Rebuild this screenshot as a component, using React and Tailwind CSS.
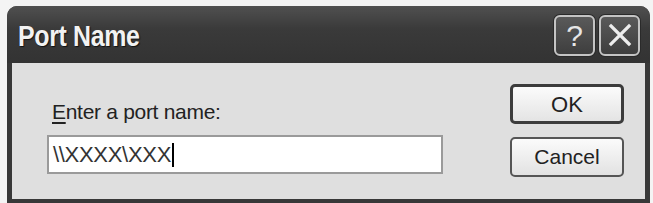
import React from "react";

function CapButton({ children }) {
  return (
    <div className="w-[41px] h-[41px] rounded-[6px] border-2 border-[#c4c4c4] bg-[linear-gradient(#5a5a5a,#3e3e3e)] shadow-[0_0_0_1px_#2a2a2a] flex items-center justify-center">
      {children}
    </div>
  );
}

export default function App() {
  return (
    <div className="w-[653px] h-[203px] bg-[#f4f4f4] overflow-hidden relative" style={{ fontFamily: '"Liberation Sans", Arial, sans-serif' }}>
      <div className="absolute left-[7px] top-[6px] w-[643px] h-[200px] rounded-t-[10px] bg-[#383838] flex flex-col">
        {/* title bar */}
        <div className="h-[57px] rounded-t-[10px] bg-[linear-gradient(#505050,#3a3a3a_40%,#333333)] flex items-center pl-[11px] pr-[10px]">
          <div className="text-[29px] font-bold text-[#f2f2f2] tracking-[-0.4px] mt-[4px] scale-x-[0.86] origin-left [text-shadow:1px_1px_1px_#111]">Port Name</div>
          <div className="ml-auto flex gap-[4px] mt-[1px]">
            <CapButton>
              <span className="text-[30px] leading-none text-[#e6e6e6] font-normal mt-[1px]">?</span>
            </CapButton>
            <CapButton>
              <svg width="26" height="26" viewBox="0 0 26 26">
                <path d="M4 4 L22 22 M22 4 L4 22" stroke="#ededed" strokeWidth="3.2" strokeLinecap="square" />
              </svg>
            </CapButton>
          </div>
        </div>
        {/* body */}
        <div className="mx-[5px] h-[136px] bg-[#dfdfdf] flex pl-[35px] pr-[21px]">
          <div className="w-[396px] flex flex-col">
            <div className="mt-[37px] pl-[5px] text-[21px] leading-[24px] text-[#222] tracking-[-0.3px]">
              <span className="underline underline-offset-[3px] decoration-[1.5px]">E</span>nter a port name:
            </div>
            <div className="mt-[11px] h-[39px] border-2 border-[#9a9a9a] bg-white flex items-center pl-[4px]">
              <span className="text-[22px] leading-none text-[#333] tracking-[-0.3px]">\\XXXX\XXX</span>
              <span className="w-[2px] h-[24px] bg-black ml-[1px]" />
            </div>
          </div>
          <div className="ml-auto flex flex-col gap-[13px] mt-[21px]">
            <button className="w-[114px] h-[40px] rounded-[5px] border-[3px] border-[#3c3c3c] bg-[linear-gradient(#fbfbfb,#e4e4e4)] text-[22px] text-[#222] flex items-center justify-center">
              OK
            </button>
            <button className="w-[114px] h-[40px] rounded-[5px] border-2 border-[#555] bg-[linear-gradient(#fbfbfb,#e2e2e2)] text-[21px] text-[#222] flex items-center justify-center">
              Cancel
            </button>
          </div>
        </div>
      </div>
    </div>
  );
}
